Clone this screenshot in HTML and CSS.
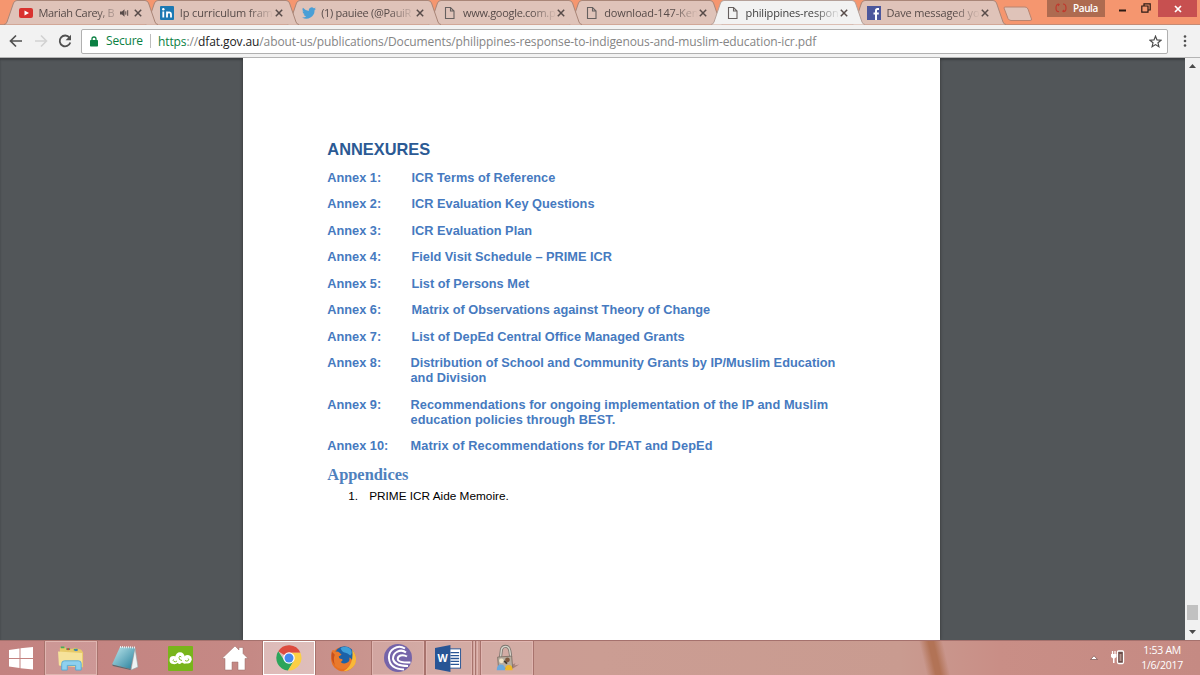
FILE: index.html
```
<!DOCTYPE html>
<html lang="en">
<head>
    <meta charset="UTF-8">
    <title>philippines-response-to-indigenous-and-muslim-education-icr.pdf</title>
    <link rel="stylesheet" href="styles.css">
</head>
<body>
    <svg class="defs" width="0" height="0">
        <symbol id="tab-shape" viewBox="0 0 154 26">
            <path d="M0 24.500 Q2 24.500 3 22 L9.500 3 Q10.500 .5 13 .5 H141 Q143.500 .5 144.500 3 L151 22 Q152 24.500 154 24.500"/>
        </symbol>
        <symbol id="page" viewBox="0 0 12 14">
            <path d="M1.500 1.500 H6.500 L10 5 V12.500 H1.500 Z M6.500 1.500 V5 H10" fill="none" stroke="#66605f" stroke-width="1.100"/>
        </symbol>
        <symbol id="x" viewBox="0 0 8 8">
            <path d="M.8 .8 L7.200 7.200 M7.200 .8 L.8 7.200" fill="none" stroke="#574b49" stroke-width="1.500"/>
        </symbol>
    </svg>

    <div class="tab-strip">
        <div class="tab t1">
            <svg class="shape"><use href="#tab-shape"/></svg>
            <svg class="fav" viewBox="0 0 14 14"><rect y="2" width="14" height="10" rx="2" fill="#d9322f"/><path d="M5.500 4.500 L10 7 L5.500 9.500Z" fill="#fff"/></svg>
            <span class="title">Mariah Carey, B</span>
            <svg class="sound" viewBox="0 0 9 8"><path d="M0 2.500H2L4.500 .3V7.700L2 5.500H0Z" fill="#574b49"/><path d="M5.800 2.300V5.700M7.700 1.200V6.800" stroke="#574b49" fill="none"/></svg>
            <svg class="close"><use href="#x"/></svg>
        </div>
        <div class="tab t2">
            <svg class="shape"><use href="#tab-shape"/></svg>
            <svg class="fav" viewBox="0 0 14 14"><rect width="14" height="14" rx="1" fill="#1c79b3"/><path d="M3.300 5.500V11.500M7 11.500V5.500M7 8.500Q7 6.300 9 6.300T11 8.500V11.500" fill="none" stroke="#fff" stroke-width="1.800"/><circle cx="3.300" cy="3.200" r="1.200" fill="#fff"/></svg>
            <span class="title">Ip curriculum fram</span>
            <svg class="close"><use href="#x"/></svg>
        </div>
        <div class="tab t3">
            <svg class="shape"><use href="#tab-shape"/></svg>
            <svg class="fav" viewBox="0 0 24 24"><path fill="#4a9fd6" d="M24 4.600a10 10 0 0 1-2.800.8 5 5 0 0 0 2.100-2.700 10 10 0 0 1-3.100 1.200 4.900 4.900 0 0 0-8.400 4.500A14 14 0 0 1 1.700 3.100a4.900 4.900 0 0 0 1.500 6.600 4.900 4.900 0 0 1-2.200-.6 4.900 4.900 0 0 0 3.900 4.900 5 5 0 0 1-2.200.1 4.900 4.900 0 0 0 4.600 3.400A9.900 9.900 0 0 1 0 19.500a14 14 0 0 0 21.500-12.400A10 10 0 0 0 24 4.600z"/></svg>
            <span class="title">(1) pauiee (@PauiR</span>
            <svg class="close"><use href="#x"/></svg>
        </div>
        <div class="tab t4">
            <svg class="shape"><use href="#tab-shape"/></svg>
            <svg class="fav page"><use href="#page"/></svg>
            <span class="title">www.google.com.p</span>
            <svg class="close"><use href="#x"/></svg>
        </div>
        <div class="tab t5">
            <svg class="shape"><use href="#tab-shape"/></svg>
            <svg class="fav page"><use href="#page"/></svg>
            <span class="title">download-147-Ken</span>
            <svg class="close"><use href="#x"/></svg>
        </div>
        <div class="tab t6 active">
            <svg class="shape"><use href="#tab-shape"/></svg>
            <svg class="fav page"><use href="#page"/></svg>
            <span class="title">philippines-respon</span>
            <svg class="close"><use href="#x"/></svg>
        </div>
        <div class="tab t7">
            <svg class="shape"><use href="#tab-shape"/></svg>
            <svg class="fav" viewBox="0 0 14 14"><rect width="14" height="14" fill="#4c579c"/><path d="M12 3H10.500Q9 3 9 4.700V14M6.500 7.500H11.800" fill="none" stroke="#fff" stroke-width="2"/></svg>
            <span class="title">Dave messaged yo</span>
            <svg class="close"><use href="#x"/></svg>
        </div>
        <svg class="new-tab" viewBox="0 0 30 16"><path d="M1.500 1H22Q24 1 25 3L28.500 13Q29 14.500 27 14.500H8Q6 14.500 5 12.500L1 2Z" fill="#dfc3b9" stroke="#b98470"/></svg>
        <div class="window-controls">
            <div class="profile">
                <svg width="12" height="10" viewBox="0 0 12 10"><path d="M4 1Q1 1 1 5T4 8.500M8 1Q11 1 11 5T8 8.500M3 3L4.500 1M9 7L7.500 8.700" fill="none" stroke="#c0392d" stroke-width="1.200"/></svg>
                <span>Paula</span>
            </div>
            <svg class="minimize" viewBox="0 0 8 3"><path d="M0 1.500H7" stroke="#2b1a14" stroke-width="2"/></svg>
            <svg class="restore" viewBox="0 0 10 10"><path d="M.8 3H7V9.200H.8ZM3 3V.8H9.200V7H7" fill="none" stroke="#2b1a14" stroke-width="1.200"/></svg>
            <div class="close-window"><svg width="8" height="8" viewBox="0 0 8 8"><path d="M1 1L7 7M7 1L1 7" stroke="#fff" stroke-width="1.700"/></svg></div>
        </div>
    </div>

    <div class="toolbar">
        <svg class="nav" viewBox="0 0 14 14"><path d="M13 7H2M7 1.500L1.500 7L7 12.500" fill="none" stroke="#505050" stroke-width="1.700"/></svg>
        <svg class="nav" viewBox="0 0 14 14"><path d="M1 7H12M7 1.500L12.500 7L7 12.500" fill="none" stroke="#d2d2d2" stroke-width="1.600"/></svg>
        <svg class="nav" viewBox="0 0 14 14"><path d="M11.500 3.700A5.400 5.400 0 1 0 12.300 8.500" fill="none" stroke="#505050" stroke-width="1.800"/><path d="M13 .8V6.200H7.600Z" fill="#505050"/></svg>
        <div class="omnibox">
            <svg class="lock" viewBox="0 0 8 11"><path d="M2 5V3Q2 1 4 1T6 3V5" fill="none" stroke="#0b8043" stroke-width="1.300"/><rect y="4" width="8" height="6.500" rx=".7" fill="#0b8043"/></svg>
            <span class="secure">Secure</span>
            <span class="url"><span class="scheme">https</span>://<b>dfat.gov.au</b>/about-us/publications/Documents/philippines-response-to-indigenous-and-muslim-education-icr.pdf</span>
            <svg class="star" viewBox="0 0 13 13"><path d="M6.500 1.200L8 4.900L12 5.200L9 7.800L9.900 11.700L6.500 9.600L3.100 11.700L4 7.800L1 5.200L5 4.900Z" fill="none" stroke="#4c4c4c" stroke-width="1.200"/></svg>
        </div>
        <svg class="menu" viewBox="0 0 4 12"><circle cx="2" cy="1.500" r="1.300"/><circle cx="2" cy="6" r="1.300"/><circle cx="2" cy="10.500" r="1.300"/></svg>
    </div>

    <div class="viewer">
        <div class="paper">
            <h1>ANNEXURES</h1>
            <dl class="annexes">
                <dt>Annex 1:</dt><dd class="s1">ICR Terms of Reference</dd>
                <dt>Annex 2:</dt><dd class="s1">ICR Evaluation Key Questions</dd>
                <dt>Annex 3:</dt><dd class="s1">ICR Evaluation Plan</dd>
                <dt>Annex 4:</dt><dd class="s1">Field Visit Schedule – PRIME ICR</dd>
                <dt>Annex 5:</dt><dd class="s1">List of Persons Met</dd>
                <dt>Annex 6:</dt><dd class="s1">Matrix of Observations against Theory of Change</dd>
                <dt>Annex 7:</dt><dd class="s1">List of DepEd Central Office Managed Grants</dd>
                <dt>Annex 8:</dt><dd>Distribution of School and Community Grants by IP/Muslim Education<br>and Division</dd>
                <dt>Annex 9:</dt><dd class="loose">Recommendations for ongoing implementation of the IP and Muslim<br>education policies through BEST.</dd>
                <dt>Annex 10:</dt><dd class="looser">Matrix of Recommendations for DFAT and DepEd</dd>
            </dl>
            <h2>Appendices</h2>
            <div class="appendix"><span>1.</span><span>PRIME ICR Aide Memoire.</span></div>
        </div>
        <div class="scrollbar">
            <svg width="7" height="4" viewBox="0 0 7 4"><path d="M0 4L3.500 0L7 4Z" fill="#4b4b4b"/></svg>
            <div class="thumb"></div>
            <svg width="7" height="4" viewBox="0 0 7 4"><path d="M0 0L3.500 4L7 0Z" fill="#4b4b4b"/></svg>
        </div>
    </div>

    <div class="taskbar">
        <div class="task start">
            <svg width="25" height="23" viewBox="0 0 25 23"><path d="M0 3L10.500 1.500V11H0ZM11.500 1.300L24 0V11H11.500ZM0 12H10.500V21L0 19.500ZM11.500 12H24V22.500L11.500 21.200Z" fill="#fff"/></svg>
        </div>
        <div class="task open explorer">
            <svg width="28" height="26" viewBox="0 0 30 28"><path d="M3 3L8 1.500L10 4H17L19 3L26 5L28 8V24L3 22Z" fill="#e8ca69"/><path d="M4 2.500H8M10 4.500H14M18 5H22" stroke="#49a85b" stroke-width="2"/><path d="M11 4.500H13" stroke="#d34437" stroke-width="2"/><path d="M19 5.500H22" stroke="#3e7ec4" stroke-width="2"/><path d="M1 7L27 8.500V24L2 22Z" fill="#f6e29a"/><path d="M5 27V20Q5 17 8 17H23Q26 17 26 20V27H20V22H11V27Z" fill="#8ed0ee" stroke="#57a9d2"/></svg>
        </div>
        <div class="task plain">
            <svg width="28" height="26" viewBox="0 0 28 26"><defs><linearGradient id="np" x2="1" y2="1"><stop stop-color="#c0e9ee"/><stop offset="1" stop-color="#267f9b"/></linearGradient></defs><path d="M23 3L26 22L19 25Z" fill="#edf3f4" stroke="#8ea4a8" stroke-width=".6"/><path d="M8 2L23 2.500L18.500 24L0 19.500Z" fill="url(#np)"/><path d="M8 2L23 2.500" stroke="#e7eef0" stroke-width="2" stroke-dasharray="1 1"/><path d="M0 19.500L18.500 24V25L1 21Z" fill="#5a6b70"/></svg>
        </div>
        <div class="task plain">
            <svg width="25" height="25" viewBox="0 0 25 25"><rect width="25" height="25" rx="1" fill="#78b51b"/><circle cx="5.500" cy="14" r="4" fill="#fff"/><circle cx="12" cy="11" r="4.700" fill="#fff"/><circle cx="19.500" cy="13.300" r="4.200" fill="#fff"/><path d="M5 12H19V17Q16 18.500 14 16.500Q12 19 9.500 17Q8 18.500 5 18Z" fill="#fff"/><path d="M9 15Q7.500 16.300 6 15.500T5.500 13.500M14 14.500Q10.500 14 11 11.500T13.300 11M17 14.500Q19 15.800 20.300 14.500T19.800 12.500" fill="none" stroke="#78b51b" stroke-width=".9"/></svg>
        </div>
        <div class="task plain">
            <svg width="28" height="26" viewBox="0 0 28 26"><path d="M14 1L18 5V2.500H22V8.500L27 13.500H24V25H17V17H11V25H4V13.500H1Z" fill="#fff" stroke="#9b6d68" stroke-width=".5"/></svg>
        </div>
        <div class="task current">
            <svg width="26" height="26" viewBox="0 0 27 27"><path d="M13.500 13.500L2.300 6.500A13 13 0 0 1 25.300 8H13.500Z" fill="#dd4b3e"/><path d="M2.300 6.500A13 13 0 0 0 12.500 26.400L18.500 16.500L13.500 13.500L8 15Z" fill="#2da55b"/><path d="M25.300 8A13 13 0 0 1 12.500 26.400L18.700 16L16 8Z" fill="#fbcf45"/><circle cx="13.500" cy="13.500" r="6" fill="#fff"/><circle cx="13.500" cy="13.500" r="4.700" fill="#4688ee"/></svg>
        </div>
        <div class="task plain firefox">
            <svg width="27" height="27" viewBox="0 0 28 28"><circle cx="14" cy="14.500" r="12.800" fill="#e8701f"/><circle cx="15" cy="11.500" r="10.300" fill="#1c62a8"/><path d="M11 3Q17 0 21 4Q24 8 21 11Q18 8 16 8Q12 7 11 3Z" fill="#3f9fd8"/><path d="M2 6Q4 4 5 7Q8 6 10 8L12 10L9 12Q9 15 12.500 14.500Q14 16 11 17.500Q14 20.500 17.500 18.500Q21 17 20 13Q23 14 24 19Q19 25 12 25Q3 23 1.500 14Q1 9 2 6Z" fill="#e9792b"/><path d="M23 5Q29 12 26 20Q22 27 14 27.300Q20 24 22 18Q24 13 23 5Z" fill="#f8b838"/><path d="M2 7Q0 15 5 21Q3 14 5 10Z" fill="#c8501c"/></svg>
        </div>
        <div class="task open">
            <svg width="28" height="28" viewBox="0 0 28 28"><circle cx="14" cy="14" r="14" fill="#7564a9"/><path d="M21 4.500A10.500 10.500 0 0 0 5 14.500Q6 25 20 25.500M22 8.500A8 8 0 0 0 9 15Q10.500 22 24 22M23 12.500Q20 10.500 16.500 11.500Q13 13 14 16Q16 19 26.500 18.500" fill="none" stroke="#fff" stroke-width="2"/></svg>
        </div>
        <div class="task open word">
            <svg width="27" height="27" viewBox="0 0 28 28"><rect x="14" y="4" width="12.500" height="20" fill="#fff" stroke="#285595"/><path d="M16 8H25M16 11H25M16 14H25M16 17H25M16 20H25" stroke="#285595" stroke-width="1.300"/><path d="M0 3L16 0V28L0 25Z" fill="#285595"/><text x="2.500" y="18" class="word-letter">W</text></svg>
        </div>
        <div class="stack"></div><div class="stack last"></div>
        <div class="task open">
            <svg width="28" height="28" viewBox="0 0 30 28"><path d="M14 24L24 19.500L23 22L28 21L20 26Z" fill="#88645e" opacity=".6"/><path d="M8 14L9 5Q10 1.500 13.500 1.500T18 6L19 13" fill="none" stroke="#77736d" stroke-width="3.200"/><path d="M8 14L9 5Q10 1.500 13.500 1.500T18 6L19 13" fill="none" stroke="#d9d5cb" stroke-width="1.500"/><path d="M5 13L20 12L21 24L6 26Z" fill="#b7ada0" stroke="#817267"/><circle cx="9" cy="17" r="2.500" fill="#f0e2c4"/><circle cx="15.500" cy="16" r="2.500" fill="#80583e"/><path d="M12 17L15 20" stroke="#443a30" stroke-width="2"/><path d="M4 27Q4 21 8.500 21T13 27Z" fill="#69a9de"/><path d="M13 27Q13 21.500 17 21.500T21 27Z" fill="#efb928"/></svg>
        </div>
        <div class="tray">
            <svg width="8" height="5" viewBox="0 0 8 5"><path d="M.5 4.500L4 .8L7.500 4.500Z" fill="#fff" stroke="#75504c" stroke-width=".7"/></svg>
            <svg width="15" height="15" viewBox="0 0 15 15"><path d="M7.500 2Q7.500 1 8.500 1H12.500Q13.500 1 13.500 2V12Q13.500 13.500 12.500 13.500H8.500Q7.500 13.500 7.500 12Z" fill="#6c4d49" stroke="#fff" stroke-width="1.300"/><path d="M2.500 1V4M5 1V4" stroke="#fff" stroke-width="1.200"/><path d="M1 4H6.500V7L4.500 8.500V13H3V8.500L1 7Z" fill="#fff"/><path d="M9.500 4H11.500V11H9.500Z" fill="#b3908a"/></svg>
            <div class="clock">1:53 AM<br>1/6/2017</div>
        </div>
    </div>
</body>
</html>
```
FILE: styles.css
```
* {
    box-sizing: border-box;
}
body {
    margin: 0;
    width: 1200px;
    height: 675px;
    overflow: hidden;
    display: flex;
    flex-direction: column;
    font-family: "Open Sans", "Noto Sans", sans-serif;
}
svg {
    display: block;
    flex: none;
}
.defs {
    position: absolute;
}

/* tabs */
.tab-strip {
    height: 25px;
    flex: none;
    display: flex;
    padding-left: 4px;
    background: #f5966f;
    box-shadow: inset 0 -1px #c58b74;
}
.tab {
    position: relative;
    width: 154px;
    height: 26px;
    margin-right: -12.700px;
    padding: 0 16.500px 0 15px;
    display: flex;
    flex: none;
    align-items: center;
    font-size: 11px;
    letter-spacing: -.15px;
    color: #574b49;
}
.t1 { z-index: 7; }
.t2 { z-index: 6; }
.t3 { z-index: 5; }
.t4 { z-index: 4; }
.t5 { z-index: 3; }
.t6 { z-index: 8; }
.t7 { z-index: 1; }
.shape {
    position: absolute;
    left: 0;
    top: 0;
    width: 154px;
    height: 26px;
    z-index: -1;
    fill: #dfc3b9;
    stroke: #a98678;
}
.active {
    color: #3e3e3e;
}
.active .shape {
    fill: #f2f2f2;
    stroke: #b5a19a;
}
.fav {
    width: 14px;
    height: 14px;
    margin-right: 5.500px;
}
.page {
    width: 12px;
    margin-left: 1.500px;
    margin-right: 6.500px;
}
.title {
    flex: 1;
    white-space: nowrap;
    line-height: 18px;
    -webkit-mask-image: linear-gradient(to right, #000 68px, transparent 94px);
    mask-image: linear-gradient(to right, #000 68px, transparent 94px);
}
.t1 .title {
    letter-spacing: -.35px;
    -webkit-mask-image: linear-gradient(to right, #000 58px, transparent 82px);
    mask-image: linear-gradient(to right, #000 58px, transparent 82px);
}
.t3 .title,
.t4 .title {
    letter-spacing: -.3px;
}
.sound {
    width: 9px;
    height: 8px;
    margin-right: 5px;
}
.close {
    width: 8px;
    height: 8px;
}
.new-tab {
    width: 30px;
    height: 16px;
    margin: 6px 0 0 10px;
}
.window-controls {
    display: flex;
    margin-left: auto;
    margin-right: 3px;
}
.profile {
    width: 58px;
    height: 17px;
    margin-right: 14px;
    padding-left: 8px;
    display: flex;
    align-items: center;
    gap: 6px;
    background: #ae6b50;
    color: #fff;
    font-size: 10px;
    font-weight: 600;
    letter-spacing: -.4px;
    line-height: 14px;
    padding-bottom: 2px;
}
.minimize {
    width: 8px;
    height: 3px;
    margin: 9px 14px 0 0;
}
.restore {
    width: 10px;
    height: 10px;
    margin: 3px 7px 0 0;
}
.close-window {
    width: 39px;
    height: 17px;
    display: flex;
    align-items: center;
    justify-content: center;
    background: #c75050;
}

/* address bar */
.toolbar {
    height: 33px;
    flex: none;
    display: flex;
    align-items: center;
    padding: 0 13px 0 9px;
    background: #f2f2f2;
    border-bottom: 1px solid #b4b4b4;
}
.nav {
    width: 14px;
    height: 14px;
    margin-right: 10.500px;
}
.omnibox {
    width: 1087px;
    height: 25px;
    margin-left: -1.500px;
    padding: 0 5px 0 8px;
    display: flex;
    align-items: center;
    background: #fff;
    border: 1px solid #b0b0b0;
    border-radius: 2px;
    font-size: 12px;
    white-space: nowrap;
}
.lock {
    width: 8px;
    height: 11px;
    margin-right: 8px;
}
.secure {
    width: 45px;
    letter-spacing: -.2px;
    border-right: 1px solid #bdbdbd;
    line-height: 14px;
    color: #0b8043;
}
.url {
    margin-left: 7px;
    letter-spacing: -.107px;
    color: #858585;
}
.url b {
    font-weight: normal;
    color: #222;
}
.scheme {
    color: #0b8043;
}
.star {
    width: 13px;
    height: 13px;
    margin-left: auto;
}
.menu {
    width: 4px;
    height: 12px;
    margin-left: auto;
    fill: #505050;
}

/* pdf viewer */
.viewer {
    height: 582px;
    flex: none;
    display: flex;
    background: #525659;
    box-shadow: inset 0 2px 2px #3c3f42;
}
.paper {
    width: 697px;
    margin-left: 243px;
    padding: 80px 0 0 84.300px;
    background: #fff;
    box-shadow: 0 0 3px #333;
    clip-path: inset(0 -4px);
    font-family: "Liberation Sans", Arial, sans-serif;
}
.paper h1 {
    margin: 0;
    font-size: 16.400px;
    line-height: 22px;
    color: #2b5a94;
}
.annexes {
    margin: 10px 0 0;
    display: grid;
    grid-template-columns: 83.200px 1fr;
    row-gap: 11.460px;
    font-size: 12.780px;
    font-weight: bold;
    line-height: 15px;
    color: #467ac0;
}
.annexes dd {
    margin: 0;
    white-space: nowrap;
}
.annexes .s1 {
    padding-left: 1px;
}
.annexes .loose {
    letter-spacing: .06px;
}
.annexes .looser {
    letter-spacing: .1px;
}
.paper h2 {
    margin: 12px 0 0;
    font-family: "Liberation Serif", serif;
    font-size: 16.400px;
    line-height: 20px;
    color: #4f81bd;
}
.appendix {
    display: flex;
    gap: 11px;
    margin: 3px 0 0 21px;
    font-size: 11.800px;
    line-height: 16px;
    color: #000;
}
.scrollbar {
    width: 15px;
    margin-left: auto;
    padding: 6px 0 6px;
    display: flex;
    flex-direction: column;
    align-items: center;
    background: #f1f1f1;
}
.thumb {
    width: 11px;
    height: 15px;
    margin-top: auto;
    margin-bottom: 10px;
    background: #c1c1c1;
}

/* taskbar */
.taskbar {
    height: 35px;
    flex: none;
    display: flex;
    background:
        linear-gradient(77deg, transparent 903px, #b27356 912px, #b27356 917px, transparent 926px),
        linear-gradient(to right, #c38280 0, #c58985 250px, #cb9a93 420px, #cb9d93 600px, #c99b90 900px, #c98e86 1000px, #c58a83 1200px);
    box-shadow: inset 0 1px #a5716d;
}
.task {
    width: 52px;
    margin-top: 1px;
    margin-right: 2px;
    display: flex;
    flex: none;
    align-items: center;
    justify-content: center;
}
.start {
    width: 43px;
}
.explorer {
    margin-right: 3px;
}
.open,
.current {
    border: 1px solid #dfb5b0;
    box-shadow: 0 0 0 1px #a8736d;
    background: rgba(255, 255, 255, .16);
}
.current {
    border-color: #fff;
    background: rgba(255, 255, 255, .42);
}
.plain {
    width: 52.300px;
}
.firefox {
    width: 53px;
}
.word {
    width: 46px;
    margin-right: 0;
}
.word-letter {
    font: bold 11px "Open Sans", sans-serif;
    fill: #fff;
}
.stack {
    width: 3px;
    margin-top: 1px;
    background: rgba(255, 255, 255, .1);
    border-right: 1px solid #dfb5b0;
    border-left: 1px solid #a8736d;
}
.last {
    margin-right: 3px;
}
.tray {
    margin-left: auto;
    padding-right: 17px;
    display: flex;
    align-items: center;
    gap: 11px;
    color: #fff;
}
.tray svg {
    margin-left: 1px;
}
.clock {
    margin-left: 5px;
    padding-top: 1px;
    font-size: 10.500px;
    letter-spacing: -.25px;
    line-height: 15px;
    text-align: center;
}
```
